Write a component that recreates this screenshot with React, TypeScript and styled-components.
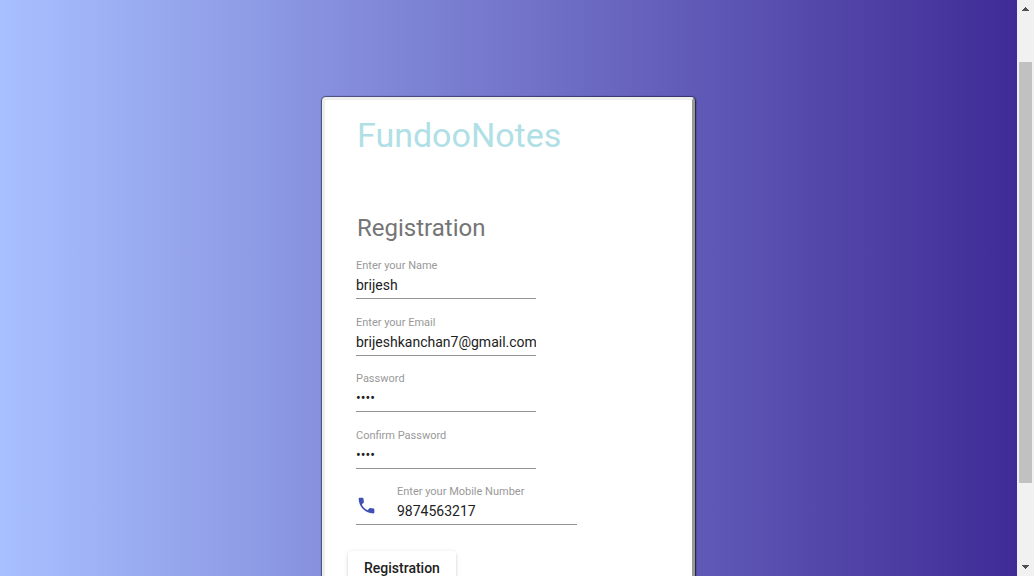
import React from "react";
import styled, { createGlobalStyle } from "styled-components";

const GlobalStyle = createGlobalStyle`
  * { box-sizing: border-box; }
  body { margin: 0; font-family: Roboto, "Liberation Sans", sans-serif; }
`;

const Shell = styled.div`
  display: flex;
  height: 100vh;
  overflow: hidden;
`;

const Page = styled.main`
  flex: 1;
  min-width: 0;
  overflow: hidden;
  padding: 97px 16px 0;
  background: linear-gradient(to right, #a8c0ff, #3f2b96);
`;

const Card = styled.section`
  width: 100%;
  max-width: 373px;
  min-height: 560px;
  margin: 0 auto;
  padding: 15px 31px;
  border: 3px solid;
  border-color: #eeeeee #989898 #989898 #eeeeee;
  border-radius: 4px;
  background: #fff;
  box-shadow: 0 0 1px 1px rgba(0, 0, 0, 0.45), 1px 1px 2px rgba(0, 0, 0, 0.4);
`;

const Title = styled.h1`
  margin: 0 0 57px;
  padding-left: 1px;
  font-size: 34px;
  line-height: 40px;
  font-weight: 400;
  color: #b0e0e6;
`;

const Heading = styled.h2`
  margin: 0 0 13px;
  padding-left: 1px;
  font-size: 24px;
  line-height: 32px;
  font-weight: 400;
  color: #757575;
`;

const Form = styled.form`
  display: flex;
  flex-direction: column;
  align-items: flex-start;
`;

const Fields = styled.div`
  display: flex;
  flex-direction: column;
  justify-content: space-between;
  min-height: 268px;
  margin-bottom: 26px;
`;

const FieldRow = styled.div`
  display: flex;
  align-items: flex-end;
  align-self: flex-start;
  border-bottom: 1px solid #949494;
`;

const Prefix = styled.span`
  display: flex;
  width: 41px;
  padding-bottom: 8px;
`;

const FieldBody = styled.div`
  display: flex;
  flex-direction: column;
  width: 180px;
`;

const Label = styled.label`
  font-size: 11px;
  line-height: 18px;
  color: #999;
`;

const Input = styled.input`
  width: 100%;
  height: 23px;
  padding: 0 0 3px;
  border: 0;
  outline: 0;
  background: transparent;
  font: 400 14px/20px Roboto, "Liberation Sans", sans-serif;
  color: #212121;
`;

const SubmitButton = styled.button`
  height: 36px;
  margin-left: -8px;
  padding: 0 16px 2px;
  border: 0;
  border-radius: 4px;
  background: #fff;
  font: 500 14px/34px Roboto, "Liberation Sans", sans-serif;
  color: #212121;
  box-shadow: 0 3px 1px -2px rgba(0, 0, 0, 0.2), 0 2px 2px rgba(0, 0, 0, 0.14),
    0 1px 5px rgba(0, 0, 0, 0.12);
`;

const Scrollbar = styled.div`
  display: flex;
  flex-direction: column;
  width: 17px;
  background: #f1f1f1;
`;

const Arrow = styled.svg`
  display: block;
  width: 17px;
  height: 17px;
  fill: #505050;
`;

const Track = styled.div`
  flex: 1;
  display: grid;
  grid-template-rows: 45fr 421fr 76fr;
  padding: 0 2px;
`;

const Thumb = styled.div`
  grid-row: 2;
  background: #c1c1c1;
`;

type FieldProps = {
  id: string;
  label: string;
  value: string;
  type?: string;
  icon?: React.ReactNode;
};

function Field({ id, label, value, type = "text", icon }: FieldProps) {
  return (
    <FieldRow>
      {icon && <Prefix>{icon}</Prefix>}
      <FieldBody>
        <Label htmlFor={id}>{label}</Label>
        <Input id={id} type={type} defaultValue={value} />
      </FieldBody>
    </FieldRow>
  );
}

const PhoneIcon = () => (
  <svg width="21" height="21" viewBox="0 0 24 24" fill="#3f51b5" aria-hidden="true">
    <path d="M6.62 10.79c1.44 2.83 3.76 5.14 6.59 6.59l2.2-2.2c.27-.27.67-.36 1.02-.24 1.12.37 2.33.57 3.57.57.55 0 1 .45 1 1V20c0 .55-.45 1-1 1-9.39 0-17-7.61-17-17 0-.55.45-1 1-1h3.5c.55 0 1 .45 1 1 0 1.25.2 2.45.57 3.57.11.35.03.74-.25 1.02l-2.2 2.2z" />
  </svg>
);

export default function App() {
  return (
    <Shell>
      <GlobalStyle />
      <Page>
        <Card>
          <Title>FundooNotes</Title>
          <Heading>Registration</Heading>
          <Form onSubmit={(e) => e.preventDefault()}>
            <Fields>
              <Field id="name" label="Enter your Name" value="brijesh" />
              <Field id="email" label="Enter your Email" value="brijeshkanchan7@gmail.com" />
              <Field id="password" label="Password" type="password" value="1234" />
              <Field id="confirm" label="Confirm Password" type="password" value="1234" />
              <Field
                id="mobile"
                label="Enter your Mobile Number"
                type="tel"
                value="9874563217"
                icon={<PhoneIcon />}
              />
            </Fields>
            <SubmitButton type="submit">Registration</SubmitButton>
          </Form>
        </Card>
      </Page>
      <Scrollbar aria-hidden="true">
        <Arrow viewBox="0 0 17 17" shapeRendering="crispEdges">
          <path d="M8 7h1v1h1v1h1v1h1v1H5v-1h1V9h1V8h1z" />
        </Arrow>
        <Track>
          <Thumb />
        </Track>
        <Arrow viewBox="0 0 17 17" shapeRendering="crispEdges">
          <path d="M5 6h7v1h-1v1h-1v1H9v1H8V9H7V8H6V7H5z" />
        </Arrow>
      </Scrollbar>
    </Shell>
  );
}
